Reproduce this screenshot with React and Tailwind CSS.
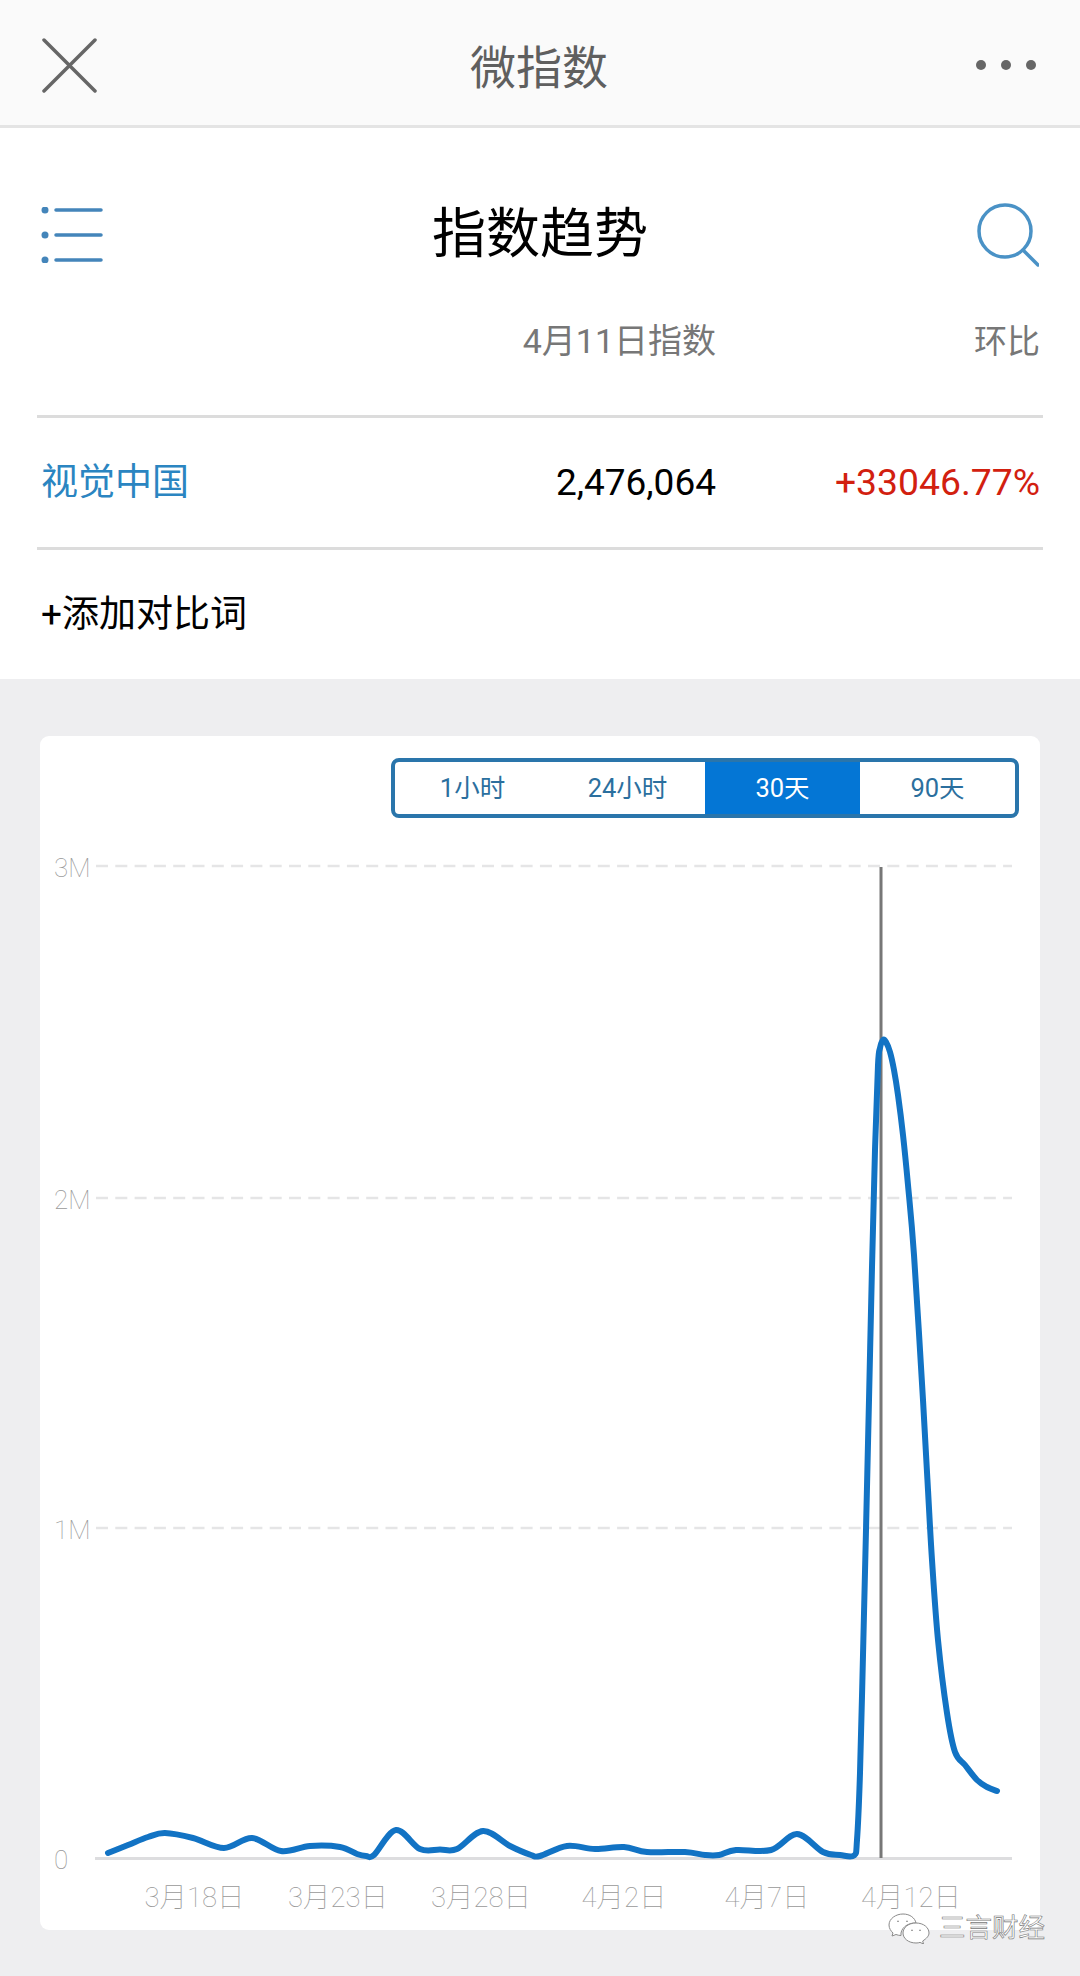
// chart points are in page pixels, the svg viewBox starts where the card's plot area starts
const curve = [
  [108, 1853], [128, 1845], [148, 1837], [165, 1833], [193, 1838], [224, 1848], [252, 1838], [281, 1851],
  [310, 1846], [340, 1847], [357, 1854], [366, 1856], [374, 1855], [396, 1830], [420, 1849], [440, 1849.500], [457, 1849], [483, 1831],
  [510, 1846], [531, 1855], [540, 1856], [567, 1846], [595, 1849], [624, 1847], [647, 1852], [685, 1852],
  [705, 1855], [719, 1855], [736, 1850], [771, 1850], [797, 1834], [823, 1852], [840, 1855], [854, 1855.500],
  [857, 1840], [860, 1773], [863, 1655], [866, 1530], [869, 1400], [872, 1267], [875, 1150], [878, 1065],
  [880, 1048], [883, 1040], [886, 1042], [890, 1052], [894, 1070], [898, 1095], [903, 1135], [908, 1185], [914, 1255],
  [923, 1400], [928, 1490], [932, 1560], [938, 1640], [947, 1713], [955, 1752], [965, 1765], [977, 1780],
  [987, 1787], [997, 1791],
]

function smoothPath(pts) {
  let d = `M${pts[0][0]} ${pts[0][1]}`
  for (let i = 0; i < pts.length - 1; i++) {
    const p0 = pts[i - 1] || pts[i]
    const p1 = pts[i]
    const p2 = pts[i + 1]
    const p3 = pts[i + 2] || p2
    const c1x = p1[0] + (p2[0] - p0[0]) / 6
    const c1y = p1[1] + (p2[1] - p0[1]) / 6
    const c2x = p2[0] - (p3[0] - p1[0]) / 6
    const c2y = p2[1] - (p3[1] - p1[1]) / 6
    d += ` C${c1x} ${c1y} ${c2x} ${c2y} ${p2[0]} ${p2[1]}`
  }
  return d
}

const yTicks = [
  { label: '3M', y: 866 },
  { label: '2M', y: 1198 },
  { label: '1M', y: 1528 },
]

const xTicks = [
  { label: '3月18日', x: 194.5 },
  { label: '3月23日', x: 338 },
  { label: '3月28日', x: 481 },
  { label: '4月2日', x: 624 },
  { label: '4月7日', x: 767 },
  { label: '4月12日', x: 911 },
]

const ranges = ['1小时', '24小时', '30天', '90天']

function Chart() {
  return (
    <svg viewBox="40 818 1000 1112" className="block h-[1112px] w-[1000px]">
      {yTicks.map((t) => (
        <g key={t.label}>
          <line x1="96" x2="1012" y1={t.y} y2={t.y} stroke="#e5e5e6" strokeWidth="2.5" strokeDasharray="12 7.3" />
          <text x="54" y={t.y + 11} fontSize="26" fontWeight="100" fill="#999">{t.label}</text>
        </g>
      ))}
      <line x1="95" x2="1012" y1="1858.5" y2="1858.5" stroke="#dddddf" strokeWidth="3" />
      <text x="54" y="1869" fontSize="26" fontWeight="100" fill="#999">0</text>
      <line x1="881" x2="881" y1="867" y2="1858" stroke="#777" strokeWidth="3" />
      <path d={smoothPath(curve)} fill="none" stroke="#1273c4" strokeWidth="6" strokeLinecap="round" strokeLinejoin="round" />
      {xTicks.map((t) => (
        <text key={t.label} x={t.x} y="1907" textAnchor="middle" fontSize="27.5" fontWeight="100" fill="#999">{t.label}</text>
      ))}
    </svg>
  )
}

export default function App() {
  return (
    <div className="flex min-h-[1976px] w-[1080px] flex-col bg-[#eeeef0] font-['Roboto','Noto_Sans_CJK_SC',sans-serif]">
      <header className="grid h-[128px] grid-cols-[1fr_auto_1fr] items-center border-b-[3px] border-[#e4e4e4] bg-[#fafafa] pt-[5px] pr-[44px] pl-[42px]">
        <svg width="55" height="55" viewBox="0 0 55 55" stroke="#666" strokeWidth="3.5" strokeLinecap="round">
          <path d="M2 2L53 53M53 2L2 53" />
        </svg>
        <h1 className="mt-[5px] text-[46px] leading-none font-normal text-[#5f5f5f]">微指数</h1>
        <svg className="justify-self-end" width="61" height="12" viewBox="0 0 61 12" fill="#666">
          <circle cx="6" cy="6" r="5" />
          <circle cx="31" cy="6" r="5" />
          <circle cx="56" cy="6" r="5" />
        </svg>
      </header>

      <section className="bg-white">
        <div className="mt-[32px] flex h-[150px] items-center justify-between pr-[41px] pl-[41px]">
          <svg width="62" height="56" viewBox="0 0 62 56" stroke="#4485ba" strokeWidth="3.5" strokeLinecap="round">
            <path d="M15 3H60M15 28H60M15 53H60" />
            <g fill="#4485ba" stroke="none">
              <circle cx="4" cy="3" r="3.5" />
              <circle cx="4" cy="28" r="3.5" />
              <circle cx="4" cy="53" r="3.5" />
            </g>
          </svg>
          <h2 className="text-[54px] leading-none font-normal text-black">指数趋势</h2>
          <svg width="62" height="64" viewBox="0 0 62 64" fill="none" stroke="#4a92c6" strokeWidth="3.5" strokeLinecap="round">
            <circle cx="28" cy="28" r="26" />
            <path d="M46 47L61 62" />
          </svg>
        </div>

        <div className="mx-[37px] grid h-[108px] grid-cols-[250px_424px_324px] border-b-[3px] border-[#dcdcdc] pr-[4px] pb-[43px] pl-[5px] text-[#777]">
          <span />
          <span className="self-center text-right text-[34px] leading-none">4月11日指数</span>
          <span className="self-center text-right text-[33px] leading-none">环比</span>
        </div>

        <div className="mx-[37px] grid h-[132px] grid-cols-[250px_425px_324px] items-center border-b-[3px] border-[#dcdcdc] pr-[3px] pl-[4px]">
          <span className="text-[37px] leading-none text-[#2b85c1]">视觉中国</span>
          <span className="text-right text-[37px] leading-none text-black">2,476,064</span>
          <span className="text-right text-[37.300px] leading-none text-[#d2200f]">+33046.77%</span>
        </div>

        <div className="flex h-[129px] items-center px-[41px] text-[37px] leading-none text-black">+添加对比词</div>
      </section>

      <section className="relative px-[40px] pt-[57px]">
        <div className="h-[1194px] rounded-[9px] bg-white pt-[22px]">
          <div className="flex justify-end pr-[21px]">
            <div className="grid h-[60px] w-[628px] grid-cols-4 overflow-hidden rounded-[8px] border-[4px] border-[#2a75ab] text-[25.500px] text-[#2b6f9e]">
              {ranges.map((r) => (
                <button key={r} className={r === '30天' ? 'bg-[#0476d5] text-white' : ''}>{r}</button>
              ))}
            </div>
          </div>
          <Chart />
        </div>

        {/* watermark stamped over the corner of the card */}
        <div className="absolute top-[1234px] left-[888px] flex items-center gap-[9px]">
          <svg width="42" height="31" viewBox="0 0 42 31" fill="#fff" stroke="#8a8a8a" strokeWidth="1">
            <path d="M15 1C8 1 1 5.500 1 12c0 3.500 2 6 4 8l-1 3 4-1.500c1.500.5 3 1 5 1C12 16 19 9.500 28 10 27 5 22 1 15 1z" />
            <path d="M28 10c-7.500 0-13 4.500-13 10s5.500 10 13 10c1.500 0 3-.2 4-.6l3.500 1.600-.8-3C38.500 25.500 41 23 41 20c0-5.500-5.500-10-13-10z" />
            <path d="M23 17.500a1.500 1.500 0 0 1 2 0M31 17.500a1.500 1.500 0 0 1 2 0M9 8.500a1.500 1.500 0 0 1 2 0M18 8.500a1.500 1.500 0 0 1 2 0" fill="none" />
          </svg>
          <span className="text-[26.500px] leading-none text-white [-webkit-text-stroke:0.6px_#777]">三言财经</span>
        </div>
      </section>
    </div>
  )
}
